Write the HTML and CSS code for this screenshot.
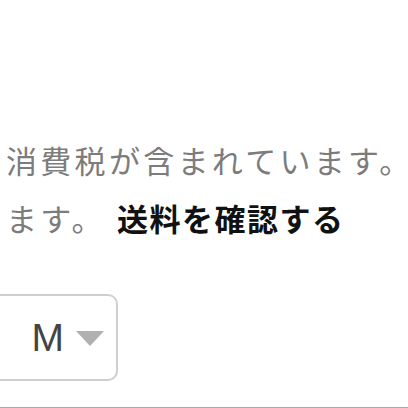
FILE: index.html
```html
<!DOCTYPE html>
<html lang="ja">
<head>
<meta charset="utf-8">
<link rel="stylesheet" href="styles.css">
</head>
<body>
<div class="page">
  <div class="tax">
    <p class="line">消費税が含まれています。</p>
    <p class="line">ます。 <a class="ship" href="#">送料を確認する</a></p>
  </div>
  <div class="select">
    <span class="value">M</span>
    <span class="caret"></span>
  </div>
</div>
</body>
</html>
```

FILE: styles.css
```css
html, body {
  margin: 0;
  padding: 0;
  background: #fff;
}
.page {
  width: 408px;
  height: 408px;
  box-sizing: border-box;
  overflow: hidden;
  border-bottom: 1px solid #a8a8a8;
  font-family: "Noto Sans CJK JP", "Noto Sans", sans-serif;
}
.tax {
  padding-top: 131px;
  padding-left: 6px;
  width: 420px;
  white-space: nowrap;
}
.line {
  margin: 0;
  font-size: 31px;
  line-height: 58px;
  letter-spacing: 3.3px;
  color: #7c7c7c;
}
.ship {
  color: #111;
  font-weight: 700;
  text-decoration: none;
  letter-spacing: 1.5px;
  margin-left: 1px;
}
.select {
  margin-top: 47px;
  margin-left: -60px;
  width: 178px;
  height: 87px;
  box-sizing: border-box;
  border: 2px solid #cfcfcf;
  border-radius: 10px;
  display: flex;
  align-items: center;
  justify-content: flex-end;
  padding-right: 12px;
  gap: 12px;
}
.value {
  font-family: "Liberation Sans", Arial, sans-serif;
  font-size: 39px;
  color: #444;
  line-height: 1;
}
.caret {
  width: 0;
  height: 0;
  border-left: 14px solid transparent;
  border-right: 14px solid transparent;
  border-top: 15px solid #b0b0b0;
  margin-top: 2px;
}
```
